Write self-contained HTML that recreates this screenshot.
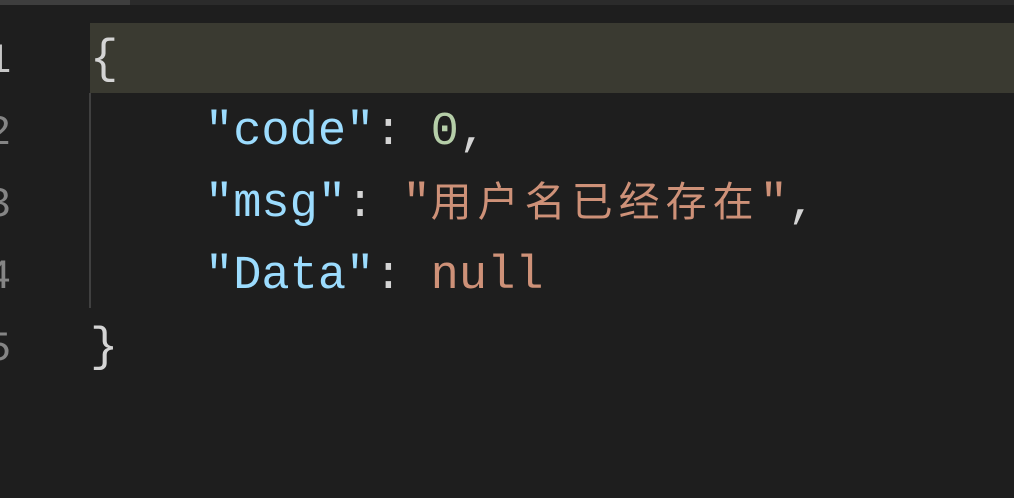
<!DOCTYPE html>
<html><head><meta charset="utf-8"><style>
html,body{margin:0;padding:0;width:1014px;height:498px;overflow:hidden;background:#1e1e1e;}
.top{position:absolute;left:0;top:0;width:1014px;height:5px;background:#2b2b2b;}
.top2{position:absolute;left:0;top:0;width:130px;height:5px;background:#3e3e3e;}
.hl{position:absolute;left:90px;top:23px;width:924px;height:70px;background:#3a3a31;}
.guide{position:absolute;left:89px;top:93px;width:2px;height:215px;background:#404040;}
.l{position:absolute;font-family:"Liberation Mono","Noto Sans CJK SC",monospace;font-size:47px;line-height:72px;height:72px;white-space:pre;color:#d4d4d4;}
.k{color:#9cdcfe}.n{color:#b5cea8}.s{color:#ce9178}
.cjk{font-family:"Noto Sans CJK SC",sans-serif;font-size:41px;letter-spacing:6px;line-height:0;}
.ln{position:absolute;left:-14px;font-family:"Liberation Mono",monospace;font-size:42px;line-height:72px;color:#858585;}
</style></head><body>
<div class="top"></div><div class="top2"></div>
<div class="hl"></div><div class="guide"></div>
<div class="ln" style="top:25px;color:#c6c6c6">1</div>
<div class="ln" style="top:97px">2</div>
<div class="ln" style="top:169px">3</div>
<div class="ln" style="top:241px">4</div>
<div class="ln" style="top:313px">5</div>
<div class="l" style="left:90px;top:25px">{</div>
<div class="l" style="left:205px;top:97px"><span class="k">"code"</span>: <span class="n">0</span>,</div>
<div class="l" style="left:205px;top:169px"><span class="k">"msg"</span>: <span class="s">"<span class="cjk">用户名已经存在</span>"</span>,</div>
<div class="l" style="left:205px;top:241px"><span class="k">"Data"</span>: <span class="s">null</span></div>
<div class="l" style="left:90px;top:313px">}</div>
</body></html>
